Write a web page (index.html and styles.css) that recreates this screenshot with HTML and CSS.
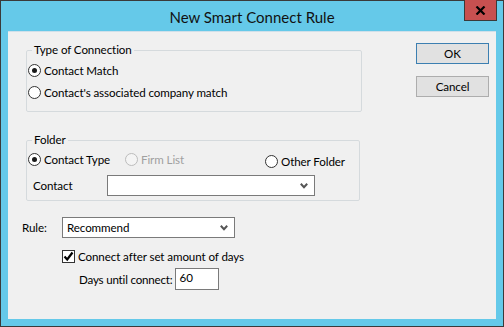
FILE: index.html
```html
<!DOCTYPE html>
<html>
<head>
<meta charset="utf-8">
<link rel="stylesheet" href="styles.css">
</head>
<body>
<div class="window">
  <div class="titlebar">
    <div class="spacer"></div>
    <div class="title">New Smart Connect Rule</div>
    <div class="tb-right"><div class="close"><svg width="11" height="9" viewBox="0 0 11 9"><path d="M1.5 0.5 L9.5 8.5 M9.5 0.5 L1.5 8.5" stroke="#000" stroke-width="2.2"/></svg></div></div>
  </div>
  <div class="client">
    <div class="left">
      <fieldset class="group g1">
        <legend>Type of Connection</legend>
        <div class="opt r1"><span class="radio checked"></span><span>Contact Match</span></div>
        <div class="opt r2"><span class="radio"></span><span>Contact's associated company match</span></div>
      </fieldset>
      <fieldset class="group g2">
        <legend>Folder</legend>
        <div class="radio-row">
          <div class="opt ctype"><span class="radio checked"></span><span>Contact Type</span></div>
          <div class="opt disabled firm"><span class="radio"></span><span>Firm List</span></div>
          <div class="opt other"><span class="radio"></span><span>Other Folder</span></div>
        </div>
        <div class="contact-row">
          <span class="lbl-contact">Contact</span>
          <div class="combo combo-contact"><span></span><svg class="chev" width="8" height="6" viewBox="0 0 8 6"><path d="M0.8 0.8 L4 4.2 L7.2 0.8" fill="none" stroke="#555" stroke-width="2"/></svg></div>
        </div>
      </fieldset>
      <div class="rule-row">
        <span class="lbl-rule">Rule:</span>
        <div class="combo combo-rule"><span>Recommend</span><svg class="chev" width="8" height="6" viewBox="0 0 8 6"><path d="M0.8 0.8 L4 4.2 L7.2 0.8" fill="none" stroke="#555" stroke-width="2"/></svg></div>
      </div>
      <div class="check-row">
        <span class="checkbox"><svg width="11" height="11" viewBox="0 0 11 11"><path d="M1.5 5.5 L4.2 8.5 L9.5 1.5" fill="none" stroke="#000" stroke-width="2.2"/></svg></span>
        <span>Connect after set amount of days</span>
      </div>
      <div class="days-row">
        <span class="lbl-days">Days until connect:</span>
        <div class="textbox">60</div>
      </div>
    </div>
    <div class="right">
      <div class="btn default">OK</div>
      <div class="btn">Cancel</div>
    </div>
  </div>
</div>
</body>
</html>
```
FILE: styles.css
```css
* { box-sizing: border-box; }
html, body { margin: 0; padding: 0; background: #fff; }
body { font-family: "Lato", "Open Sans", sans-serif; font-size: 11.6px; letter-spacing: -0.1px; color: #000; }

.window {
  width: 504px; height: 327px;
  border: 1px solid #3a3a3a;
  background: #65c9e9;
  display: flex; flex-direction: column;
}
.titlebar {
  height: 30px;
  display: grid;
  grid-template-columns: 1fr auto 1fr;
  align-items: start;
}
.title {
  font-size: 15px;
  letter-spacing: 0;
  line-height: 30px;
  color: #111;
  padding-top: 1px;
}
.tb-right { display: flex; justify-content: flex-end; }
.close {
  width: 33px; height: 21px;
  margin-top: -1px; margin-right: 6px;
  background: #c75050;
  border: 1px solid #3a3a3a;
  border-top: none;
  display: flex; align-items: center; justify-content: center;
}
.client {
  margin: 0 7px;
  height: 288px;
  background: #f0f0f0;
  border-top: 1px solid #cfe0ea;
  display: flex;
}
.left { width: 360px; padding-left: 10px; }
.right {
  margin-left: auto; margin-right: 7px;
  padding-top: 11px;
  display: flex; flex-direction: column; gap: 12px;
}
.btn {
  width: 73px; height: 21px;
  background: #e1e1e1;
  border: 1px solid #adadad;
  text-align: center; line-height: 19px;
}
.btn.default { border-color: #3c7fb1; }

.group {
  margin: 0 0 0 8px;
  border: 1px solid #d5dadd;
  border-radius: 2px;
  padding: 0;
}
.group legend {
  padding: 0 2px 0 2px;
  margin-left: 5px;
  line-height: 16px;
}
.g1 { margin-top: 10px; width: 336px; height: 70px; }
.g2 { margin-top: 20px; width: 334px; height: 69px; }

.opt { display: flex; align-items: center; gap: 3px; height: 16px; white-space: nowrap; }
.g1 .r1 { margin-top: 4px; margin-left: 1px; }
.g1 .r2 { margin-top: 6px; margin-left: 1px; }

.radio {
  width: 13px; height: 13px;
  border: 1px solid #333;
  border-radius: 50%;
  background: #fff;
  display: inline-flex; align-items: center; justify-content: center;
  flex: none;
}
.radio.checked::after {
  content: ""; width: 5px; height: 5px; border-radius: 50%; background: #1a1a1a;
}
.disabled { color: #a0a0a0; }
.disabled .radio { border-color: #bcbcbc; background: #f4f4f4; }

.radio-row { display: flex; align-items: flex-start; margin-top: 3px; margin-left: 1px; }
.ctype { width: 97px; }
.firm { width: 140px; }
.other { margin-top: 2px; }

.contact-row { display: flex; align-items: center; margin-top: 6px; margin-left: 6px; }
.lbl-contact { width: 74px; }
.combo {
  height: 21px;
  background: #fff;
  border: 1px solid #7a7a7a;
  display: flex; align-items: center; justify-content: space-between;
  padding: 0 6px 0 4px;
}
.combo-contact { width: 208px; }
.combo-rule { width: 173px; }

.rule-row { display: flex; align-items: center; margin-top: 16px; margin-left: 4px; }
.lbl-rule { width: 40px; }

.check-row { display: flex; align-items: center; gap: 3px; margin-top: 10px; margin-left: 44px; height: 16px; white-space: nowrap; }
.checkbox {
  width: 13px; height: 13px;
  border: 1px solid #333;
  background: #fff;
  display: inline-flex; align-items: center; justify-content: center;
}
.days-row { display: flex; align-items: center; gap: 2px; margin-top: 4px; margin-left: 61px; }
.lbl-days { flex: none; white-space: nowrap; letter-spacing: -0.2px; }
.textbox {
  width: 44px; height: 22px;
  background: #fff;
  border: 1px solid #7a7a7a;
  padding-left: 4px;
  line-height: 18px;
}
```
